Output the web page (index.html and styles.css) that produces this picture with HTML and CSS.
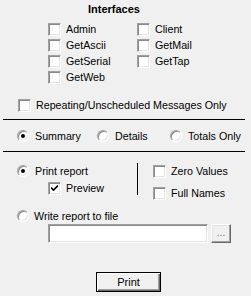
FILE: index.html
```html
<!DOCTYPE html>
<html lang="en">
<head>
    <meta charset="UTF-8">
    <title>Print Report</title>
    <link rel="stylesheet" href="styles.css">
</head>
<body>
    <div class="panel">
        <div class="title">Interfaces</div>
        <div class="ifaces">
            <label class="check"><span class="box"></span>Admin</label>
            <label class="check"><span class="box"></span>Client</label>
            <label class="check"><span class="box"></span>GetAscii</label>
            <label class="check"><span class="box"></span>GetMail</label>
            <label class="check"><span class="box"></span>GetSerial</label>
            <label class="check"><span class="box"></span>GetTap</label>
            <label class="check"><span class="box"></span>GetWeb</label>
        </div>

        <label class="check repeat"><span class="box"></span>Repeating/Unscheduled Messages Only</label>

        <div class="rule"></div>

        <div class="modes">
            <label class="radio"><span class="dot on"></span>Summary</label>
            <label class="radio"><span class="dot"></span>Details</label>
            <label class="radio"><span class="dot"></span>Totals Only</label>
        </div>

        <div class="rule"></div>

        <div class="output">
            <div class="out-left">
                <label class="radio"><span class="dot on"></span>Print report</label>
                <label class="check preview">
                    <span class="box">
                        <svg width="7" height="7" viewBox="0 0 7 7"><path d="M0 2.5 L2.5 5 L7 0.5" fill="none" stroke="#000" stroke-width="1.6"/></svg>
                    </span>Preview
                </label>
            </div>
            <div class="divider"></div>
            <div class="out-right">
                <label class="check"><span class="box"></span>Zero Values</label>
                <label class="check"><span class="box"></span>Full Names</label>
            </div>
        </div>

        <label class="radio write"><span class="dot"></span>Write report to file</label>
        <div class="file-row">
            <span class="field"></span>
            <span class="btn browse">...</span>
        </div>

        <div class="actions">
            <span class="btn print">Print</span>
        </div>
    </div>
</body>
</html>
```

FILE: styles.css
```css
body {
    margin: 0;
    background: #f0f0f0;
    color: #000;
    font-family: "Liberation Sans", Arial, sans-serif;
    font-size: 10.7px;
}

.panel {
    padding-top: 3px;
}

.title {
    font-weight: bold;
    font-size: 11px;
    line-height: 13px;
    margin-left: 88px;
}

.check, .radio {
    display: flex;
    align-items: center;
    height: 16px;
    white-space: nowrap;
}

.box {
    box-sizing: border-box;
    width: 13px;
    height: 13px;
    margin-right: 5px;
    background: #fff;
    border: 1px solid;
    border-color: #a0a0a0 #fff #fff #a0a0a0;
    box-shadow: inset 1px 1px #8a8a8a, inset -1px -1px #e3e3e3;
    display: flex;
    align-items: center;
    justify-content: center;
    flex: none;
}

.dot {
    box-sizing: border-box;
    width: 12px;
    height: 12px;
    margin-right: 6px;
    border-radius: 50%;
    background: #fff;
    border: 1px solid;
    border-color: #a0a0a0 #fff #fff #a0a0a0;
    box-shadow: inset 1px 1px #8a8a8a, inset -1px -1px #e3e3e3;
    display: flex;
    align-items: center;
    justify-content: center;
    flex: none;
}

.dot.on::after {
    content: "";
    width: 4px;
    height: 4px;
    border-radius: 50%;
    background: #000;
}

.ifaces {
    display: grid;
    grid-template-columns: 89px 89px;
    grid-auto-rows: 16px;
    margin: 5px 0 0 48px;
}

.repeat {
    margin: 12px 0 0 18px;
}

.rule {
    height: 1px;
    background: #000;
    margin: 6px 6px 0 3px;
}

.modes {
    display: grid;
    grid-template-columns: 80px 73px auto;
    margin: 8px 0 7px 17px;
}

.output {
    display: flex;
    margin-top: 11px;
}

.out-left {
    width: 120px;
    margin-left: 17px;
}

.preview {
    margin: 1px 0 0 31px;
}

.divider {
    width: 1px;
    height: 32px;
    background: #000;
}

.out-right {
    display: flex;
    flex-direction: column;
    gap: 6px;
    margin-left: 15px;
}

.write {
    margin: 7px 0 0 17px;
}

.write .dot {
    margin-right: 5px;
}

.file-row {
    display: flex;
    gap: 3px;
    margin-left: 48px;
    height: 19px;
}

.field {
    box-sizing: border-box;
    width: 160px;
    background: #fff;
    border: 1px solid;
    border-color: #a0a0a0 #fff #fff #a0a0a0;
    box-shadow: inset 1px 1px #8a8a8a, inset -1px -1px #e3e3e3;
}

.btn {
    box-sizing: border-box;
    display: flex;
    align-items: center;
    justify-content: center;
    background: #f0f0f0;
    border: 1px solid;
    border-color: #fff #696969 #696969 #fff;
    box-shadow: inset -1px -1px #a0a0a0, inset 1px 1px #e3e3e3;
}

.browse {
    width: 20px;
    color: #6d6d6d;
    font-size: 10px;
    padding-bottom: 2px;
}

.actions {
    margin: 29px 0 0 96px;
}

.print {
    width: 65px;
    height: 20px;
    font-size: 11px;
    border-color: #000;
    box-shadow: inset 1px 1px #fff, inset -1px -1px #696969, inset -2px -2px #a0a0a0;
}
```
